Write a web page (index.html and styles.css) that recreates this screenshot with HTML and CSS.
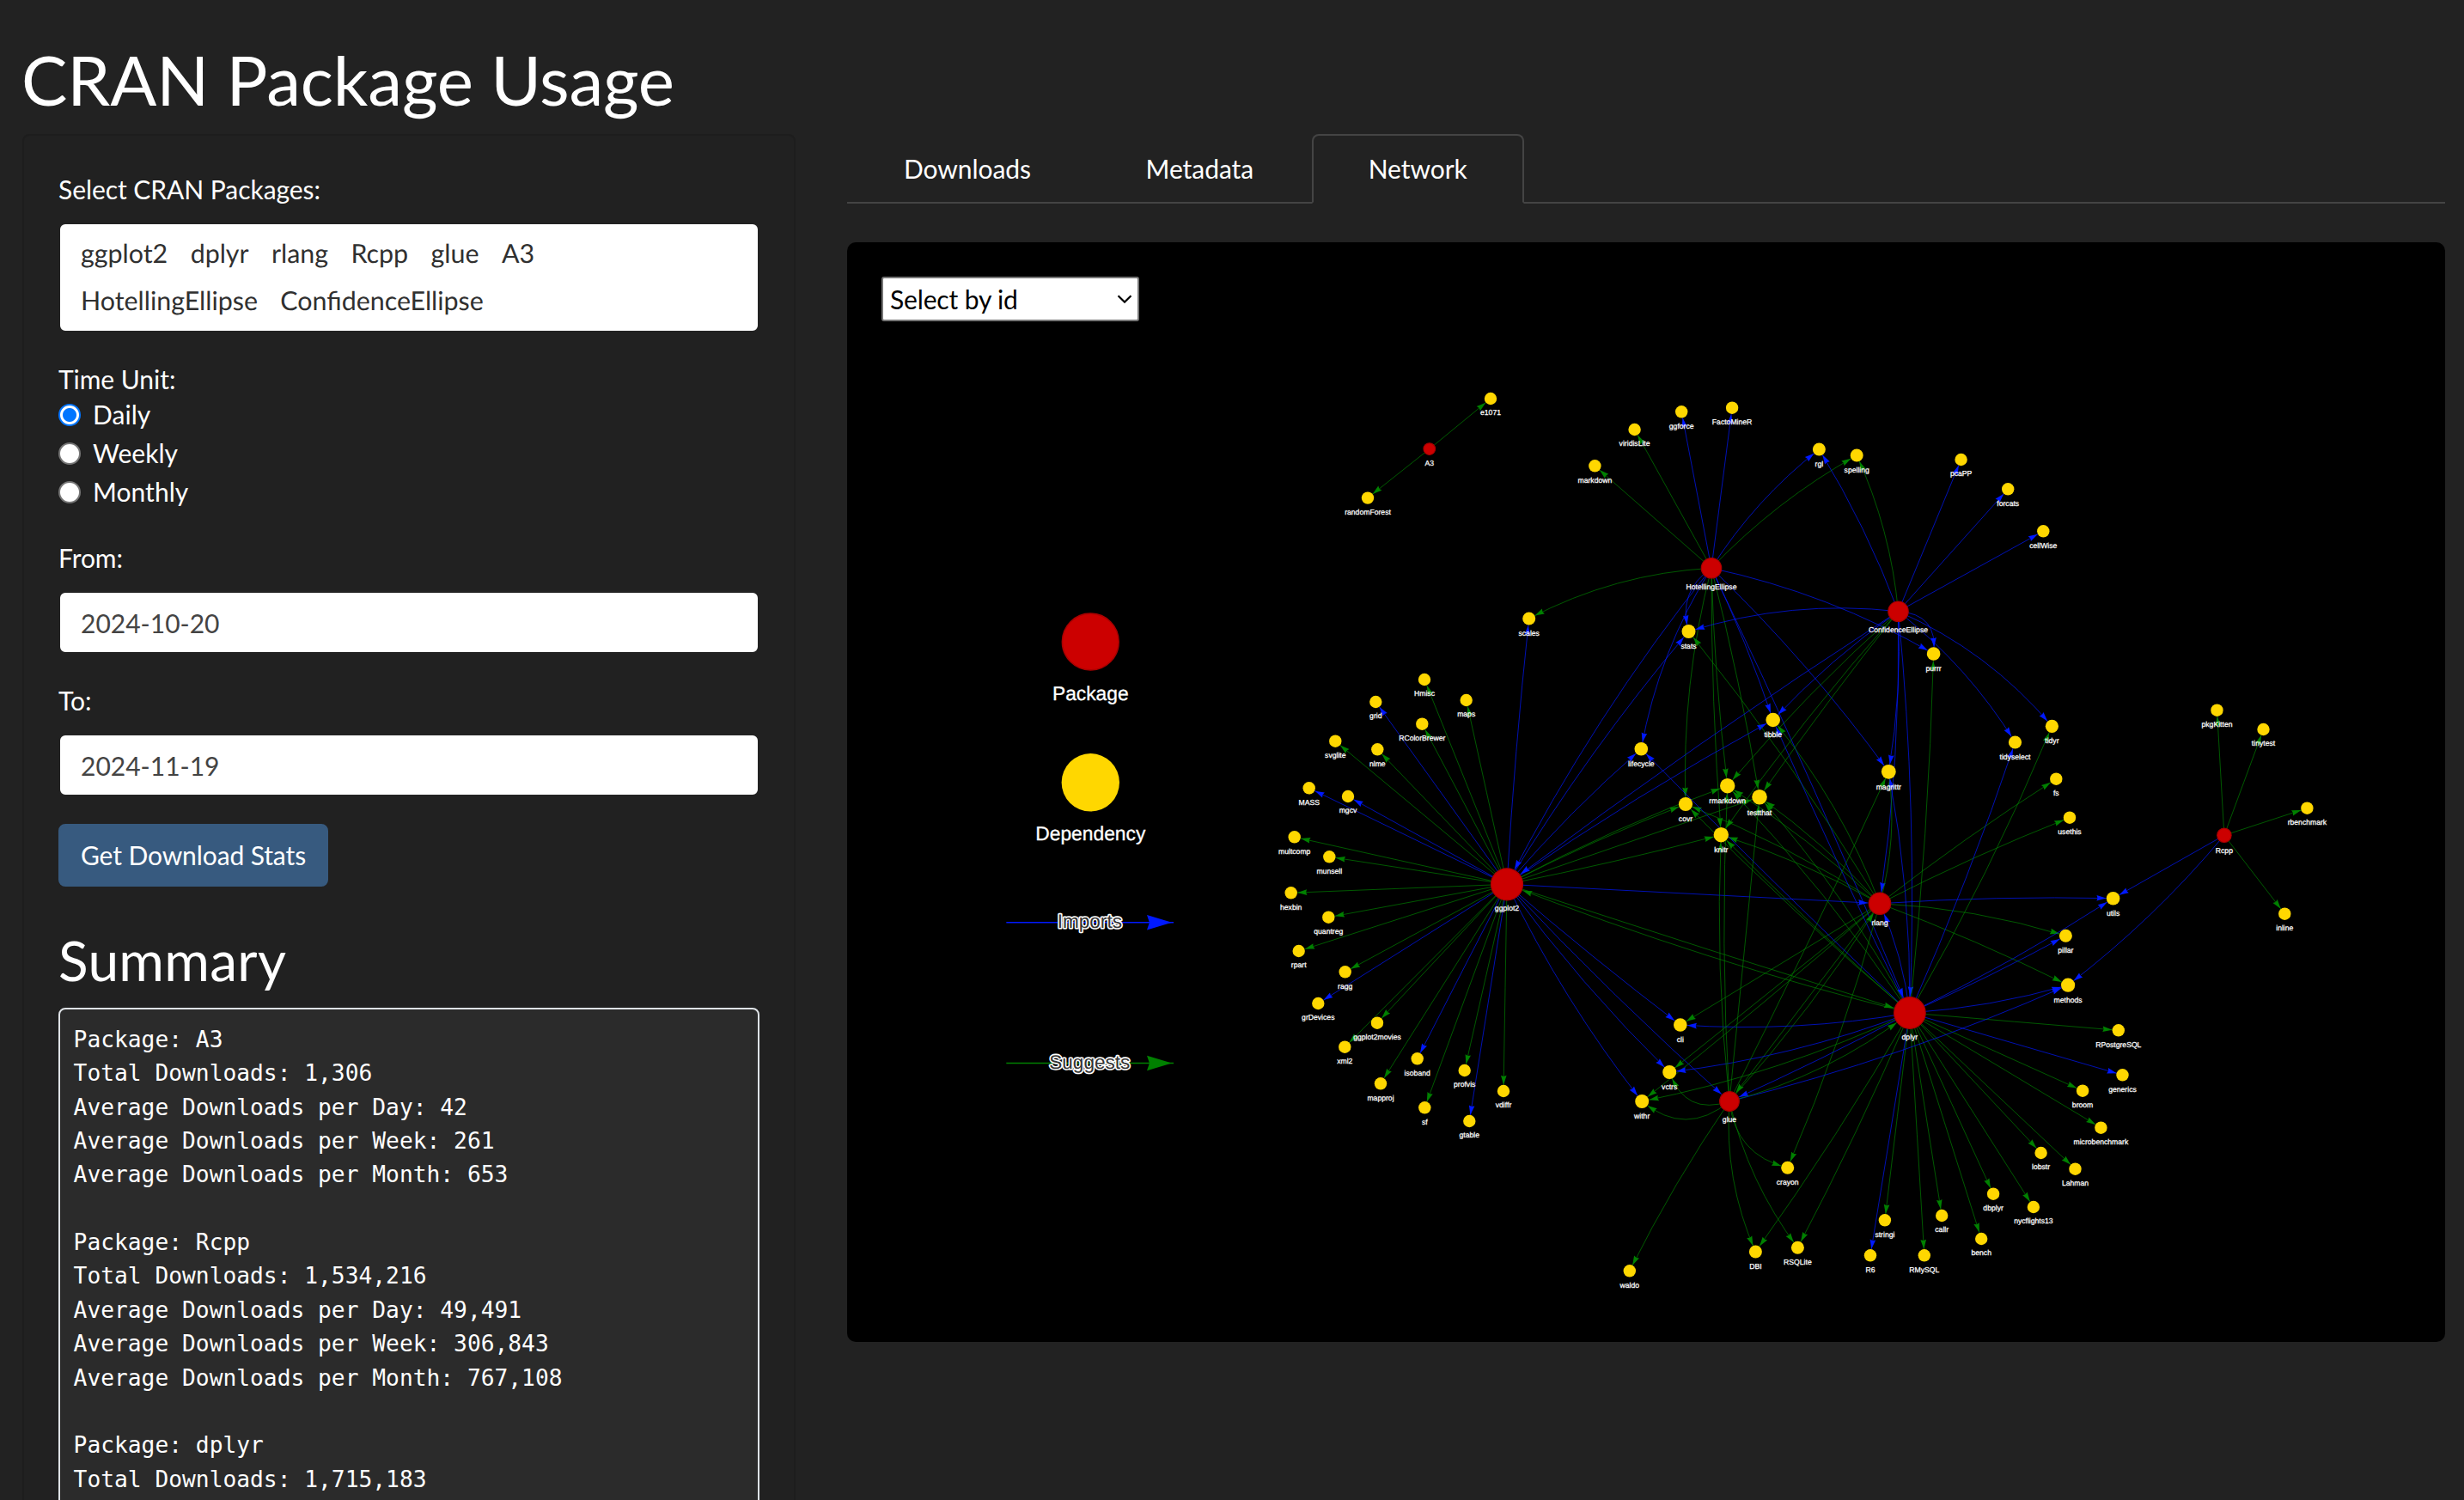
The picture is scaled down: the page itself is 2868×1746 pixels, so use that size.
FILE: index.html
```html
<!DOCTYPE html>
<html lang="en">
<head>
<meta charset="utf-8">
<title>CRAN Package Usage</title>
<link rel="stylesheet" href="styles.css">
</head>
<body>
<div class="page">
  <h2 class="title">CRAN Package Usage</h2>
  <div class="row">
    <form class="well">
      <div class="group">
        <label class="label">Select CRAN Packages:</label>
        <div class="picker">
          <span>ggplot2</span><span>dplyr</span><span>rlang</span><span>Rcpp</span><span>glue</span><span>A3</span>
          <span>HotellingEllipse</span><span>ConfidenceEllipse</span>
        </div>
      </div>
      <div class="group">
        <div class="label label-tight">Time Unit:</div>
        <label class="radio"><input type="radio" name="unit" checked><span>Daily</span></label>
        <label class="radio"><input type="radio" name="unit"><span>Weekly</span></label>
        <label class="radio"><input type="radio" name="unit"><span>Monthly</span></label>
      </div>
      <div class="group">
        <label class="label" for="from">From:</label>
        <input class="field" id="from" type="text" value="2024-10-20">
      </div>
      <div class="group">
        <label class="label" for="to">To:</label>
        <input class="field" id="to" type="text" value="2024-11-19">
      </div>
      <button class="button" type="button">Get Download Stats</button>
      <h3 class="subtitle">Summary</h3>
<pre class="summary">Package: A3
Total Downloads: 1,306
Average Downloads per Day: 42
Average Downloads per Week: 261
Average Downloads per Month: 653

Package: Rcpp
Total Downloads: 1,534,216
Average Downloads per Day: 49,491
Average Downloads per Week: 306,843
Average Downloads per Month: 767,108

Package: dplyr
Total Downloads: 1,715,183
</pre>
    </form>
    <main class="main">
      <nav class="tabs">
        <a class="tab">Downloads</a>
        <a class="tab">Metadata</a>
        <a class="tab tab-active">Network</a>
      </nav>
      <section class="panel">
        <div class="picker-id">
          <select class="select"><option>Select by id</option></select>
          <svg class="chevron" viewBox="0 0 18 10"><path d="M1.5 1.2 9 8.6 16.5 1.2"/></svg>
        </div>
        <svg class="network" id="network" viewBox="986 282 1860 1280"></svg>
      </section>
    </main>
  </div>
</div>
<script src="network.js"></script>
</body>
</html>
```
FILE: styles.css
```css
* { box-sizing: border-box; }
html, body { margin: 0; background: #222222; }
body {
  font-family: Lato, "Liberation Sans", sans-serif;
  font-size: 30px;
  line-height: 45px;
  letter-spacing: -0.05px;
  color: #ffffff;
}
.page { height: 1746px; overflow: hidden; padding: 44px 22px 0 26px; }
.title { margin: 0 0 16px -1px; font-size: 80px; line-height: 96px; font-weight: 400; letter-spacing: -0.15px; }
.row { display: flex; gap: 60px; align-items: flex-start; }
.well {
  width: 900px;
  height: 1800px;
  padding: 40px;
  background: #212121;
  border: 2px solid #1d1d1d;
  border-radius: 8px;
}
.group { margin-bottom: 32px; }
.label { display: block; margin-bottom: 16px; }
.label-tight { margin-bottom: -4px; }
.picker {
  display: flex;
  flex-wrap: wrap;
  gap: 10px 26.4px;
  height: 128px;
  padding: 12px 60px 0 24px;
  align-content: flex-start;
  font-size: 30.4px;
  letter-spacing: 0;
  text-rendering: geometricPrecision;
  color: #303030;
  background: #ffffff;
  border: 2px solid #222222;
  border-radius: 8px;
}
.radio { display: flex; align-items: center; gap: 14px; letter-spacing: 0.05px; }
.radio input {
  appearance: none;
  width: 26px;
  height: 26px;
  margin: 0;
  border: 2px solid #767676;
  border-radius: 50%;
  background: #ffffff;
}
.radio input:checked {
  border-color: #0075ff;
  background: radial-gradient(circle, #0075ff 7.5px, #ffffff 8.5px);
}
.field {
  display: block;
  width: 100%;
  height: 73px;
  padding: 12px 24px;
  font: inherit;
  color: #444444;
  background: #ffffff;
  border: 2px solid #222222;
  border-radius: 8px;
}
.button {
  display: block;
  width: 314px;
  height: 73px;
  padding: 0;
  font: inherit;
  letter-spacing: -0.1px;
  color: #ffffff;
  background: #375a7f;
  border: 2px solid #375a7f;
  border-radius: 8px;
}
.subtitle { margin: 47px 0 17px; font-size: 64px; line-height: 77px; font-weight: 400; letter-spacing: 0.3px; }
.summary {
  height: 900px;
  margin: 0;
  padding: 15.8px 15.6px;
  font-family: "DejaVu Sans Mono", monospace;
  font-size: 26.25px;
  line-height: 39.375px;
  letter-spacing: 0;
  background: #2b2b2b;
  border: 2px solid #dee2e6;
  border-radius: 8px;
}
.main { width: 1860px; }
.tabs { display: flex; gap: 1.5px; height: 81px; border-bottom: 2px solid #444444; }
.tab { height: 81px; padding: 16px 64px; border: 2px solid transparent; }
.tab-active {
  background: #222222;
  border-color: #444444;
  border-bottom-color: #222222;
  border-radius: 8px 8px 0 0;
}
.panel {
  position: relative;
  height: 1280px;
  margin-top: 45px;
  background: #000000;
  border-radius: 10px;
}
.network { display: block; width: 1860px; height: 1280px; letter-spacing: 0; }
.picker-id { position: absolute; left: 40px; top: 40px; width: 300px; height: 52px; }
.select {
  appearance: none;
  width: 100%;
  height: 100%;
  padding: 0 8px;
  font: inherit;
  letter-spacing: -0.15px;
  color: #000000;
  background: #ffffff;
  border: 2px solid #767676;
  border-radius: 3px;
}
.chevron { position: absolute; right: 8px; top: 21px; width: 18px; height: 10px; }
.chevron path { fill: none; stroke: #000000; stroke-width: 2.2; }
.network text {
  font-family: "Liberation Sans", Arial, sans-serif;
  text-rendering: geometricPrecision;
  text-anchor: middle;
  fill: #ffffff;
}
.name { font-size: 8.65px; stroke: #ffffff; stroke-width: 0.25px; }
.key { font-size: 22.8px; stroke: #ffffff; stroke-width: 0.3px; }
.network .key-edge { font-size: 22.6px; fill: #343434; stroke: #ffffff; stroke-width: 3.2px; paint-order: stroke; stroke-linejoin: round; }
.package { fill: #cc0000; stroke: #aa0000; }
.dependency { fill: #ffd700; }
.edge { fill: none; stroke-width: 0.7; }
.edge-key { stroke-width: 1.6; }
.imports { stroke: #0019ff; }
.suggests { stroke: #008000; }
.tip-imports { fill: #0019ff; }
.tip-suggests { fill: #008000; }
```
FILE: network.js
```js
// Nodes: name, x, y, radius
const packages = [
  ["A3", 1663.8, 522.6, 7.3], ["HotellingEllipse", 1992, 661.3, 12.2],
  ["ConfidenceEllipse", 2209.5, 711.7, 12.2], ["ggplot2", 1754, 1029.3, 19],
  ["rlang", 2188, 1051.7, 13.2], ["dplyr", 2222.9, 1179, 18.8],
  ["glue", 2013, 1282, 11.8], ["Rcpp", 2588.9, 972.3, 8.7]
];
const dependencies = [
  ["e1071", 1735, 464, 7.2], ["randomForest", 1592, 579.6, 7.2],
  ["scales", 1779.7, 720, 7.5], ["Hmisc", 1658, 791, 7.2], ["maps", 1706.7, 815, 7.2],
  ["grid", 1601.3, 817, 7.2], ["RColorBrewer", 1655.3, 842.7, 7.2], ["svglite", 1554.3, 862.7, 7.2],
  ["nlme", 1603.3, 872.3, 7.2], ["MASS", 1523.7, 917.3, 7.2], ["mgcv", 1569, 927, 7.2],
  ["multcomp", 1506.7, 974.3, 7.2], ["munsell", 1547.3, 997.3, 7.2], ["hexbin", 1502.7, 1039.3, 7.2],
  ["quantreg", 1546.3, 1067.7, 7.2], ["rpart", 1511.7, 1107, 7.2], ["ragg", 1565.7, 1131.3, 7.2],
  ["grDevices", 1534.3, 1168, 7.2], ["ggplot2movies", 1603, 1190.7, 7.2], ["xml2", 1565.3, 1218.7, 7.2],
  ["mapproj", 1607, 1261.3, 7.2], ["isoband", 1649.7, 1232.3, 7.2], ["profvis", 1704.7, 1246, 7.2],
  ["sf", 1658.3, 1289.3, 7.2], ["gtable", 1710.3, 1305, 7.2], ["vdiffr", 1750, 1270, 7.2],
  ["markdown", 1856.4, 542.3, 7.2], ["viridisLite", 1902.6, 500, 7.2], ["ggforce", 1957.2, 479.3, 7.2],
  ["FactoMineR", 2016.1, 474.7, 7.2], ["rgl", 2117.4, 523, 7.5], ["spelling", 2161.2, 530, 7.5],
  ["pcaPP", 2282.6, 535, 7.2], ["forcats", 2337.2, 569.3, 7.2], ["cellWise", 2378.3, 618.3, 7.2],
  ["stats", 1965.5, 735, 8], ["purrr", 2250.6, 761, 7.8], ["tibble", 2063.7, 838, 8.3],
  ["lifecycle", 1910.3, 871.7, 7.8], ["rmarkdown", 2010.7, 914.7, 8.7], ["testthat", 2048, 927.7, 8.8],
  ["covr", 1962, 936, 8.1], ["knitr", 2003.3, 971.7, 8.7], ["magrittr", 2198.3, 898.3, 8.4],
  ["tidyselect", 2345.5, 864, 7.6], ["tidyr", 2388.4, 845.3, 7.6], ["fs", 2393.3, 906.7, 7.2],
  ["usethis", 2409, 951.7, 7.2], ["utils", 2459.6, 1045.7, 7.8], ["pillar", 2404.4, 1089.3, 7.5],
  ["methods", 2407.1, 1146.7, 8.1], ["pkgKitten", 2580.5, 826.7, 7.2], ["tinytest", 2634.5, 849, 7.2],
  ["rbenchmark", 2685.4, 940.7, 7.2], ["inline", 2659.3, 1063.7, 7.2], ["cli", 1955.8, 1193, 7.8],
  ["vctrs", 1943.2, 1248, 8], ["withr", 1911.2, 1282, 8], ["crayon", 2080.7, 1359.3, 7.5],
  ["DBI", 2043.4, 1457, 7.5], ["RSQLite", 2092.4, 1452.3, 7.5], ["waldo", 1896.8, 1479.3, 7.2],
  ["R6", 2177, 1461.3, 7.2], ["stringi", 2193.9, 1420.3, 7.2], ["RMySQL", 2239.8, 1461.3, 7.2],
  ["callr", 2260.2, 1415, 7.2], ["bench", 2306.2, 1442, 7.2], ["dbplyr", 2320.1, 1389.7, 7.2],
  ["nycflights13", 2366.9, 1405, 7.2], ["Lahman", 2415.5, 1360.7, 7.2], ["lobstr", 2375.6, 1342, 7.2],
  ["microbenchmark", 2445.4, 1312.7, 7.2], ["broom", 2424.1, 1269.7, 7.2],
  ["generics", 2470.5, 1251.3, 7.2], ["RPostgreSQL", 2465.8, 1199.3, 7.2]
];
// Edges per package: "target" or "target:bend", where bend is the sideways bow in pixels
const edges = {
  A3: { suggests: "e1071 randomForest" },
  HotellingEllipse: {
    imports: "FactoMineR ggforce rgl:-8 stats:14 purrr:-11 magrittr:-7 tibble:-3 dplyr:-4 lifecycle:11 ggplot2:11",
    suggests: "viridisLite markdown spelling:-8 scales:12 covr:10 knitr:3 rmarkdown:3 testthat:-3"
  },
  ConfidenceEllipse: {
    imports: "rgl:5 pcaPP forcats cellWise stats:13 purrr:-17 tidyselect:-9 tidyr:-13 ggplot2:5 tibble:5 magrittr:-5 rlang:-7 dplyr:-8",
    suggests: "spelling:8 rmarkdown:5 knitr:5 testthat:2"
  },
  ggplot2: {
    imports: "scales:-2 grid MASS mgcv grDevices isoband gtable stats:-7 lifecycle:-4 tibble:-5 rlang cli:2 vctrs:6 withr:8 glue:4",
    suggests: "Hmisc maps RColorBrewer svglite nlme multcomp munsell hexbin quantreg rpart ragg ggplot2movies xml2 mapproj profvis sf vdiffr covr:-3 rmarkdown:-5 testthat knitr:2 dplyr:1"
  },
  rlang: {
    imports: "utils:-3",
    suggests: "tibble:10 stats:6 rmarkdown:5 testthat:5 covr:6 knitr:5 fs:-3 usethis:-3 pillar:-7 methods:-3 magrittr:8 glue cli vctrs withr:-2 crayon:-6"
  },
  dplyr: {
    imports: "rlang:5 tibble:-2 lifecycle:-2 magrittr:7 tidyselect:4 utils:4 pillar:2 methods:5 cli:-8 vctrs:-9 glue:-2 R6 generics",
    suggests: "knitr:-3 covr:-4 rmarkdown:7 testthat:9 purrr:4 tidyr:6 withr:-10 ggplot2:-8 DBI:-4 RSQLite:-3 stringi RMySQL callr bench dbplyr nycflights13 Lahman lobstr microbenchmark broom RPostgreSQL"
  },
  glue: {
    imports: "methods:9",
    suggests: "dplyr:12 knitr:-6 rmarkdown:-5 testthat magrittr:2 rlang:6 vctrs:-19 withr:-21 crayon:18 DBI:11 RSQLite:10 waldo:4"
  },
  Rcpp: { imports: "utils methods:-7", suggests: "pkgKitten tinytest rbenchmark inline" }
};

const svg = document.getElementById("network");
const nodes = {};
[...packages, ...dependencies].forEach(([name, x, y, r]) => { nodes[name] = { x, y, r }; });

function add(tag, attrs, text) {
  const el = document.createElementNS("http://www.w3.org/2000/svg", tag);
  for (const key in attrs) el.setAttribute(key, attrs[key]);
  if (text) el.textContent = text;
  svg.appendChild(el);
}

function arrow(x, y, ux, uy, size, kind) {
  const at = (along, side) =>
    (x - ux * along * size - uy * side * size).toFixed(1) + "," +
    (y - uy * along * size + ux * side * size).toFixed(1);
  add("polygon", { class: "tip-" + kind, points: [at(0, 0), at(1, 0.3), at(0.9, 0), at(1, -0.3)].join(" ") });
}

function drawEdge(from, to, kind, bend) {
  const a = nodes[from], b = nodes[to];
  const dx = b.x - a.x, dy = b.y - a.y, len = Math.hypot(dx, dy);
  const cx = (a.x + b.x) / 2 - dy / len * bend * 2;
  const cy = (a.y + b.y) / 2 + dx / len * bend * 2;
  // Walk back along the curve until it leaves the target circle
  let t = 1, px = b.x, py = b.y;
  while (t > 0 && Math.hypot(px - b.x, py - b.y) < b.r) {
    t -= 0.002;
    const s = 1 - t;
    px = s * s * a.x + 2 * s * t * cx + t * t * b.x;
    py = s * s * a.y + 2 * s * t * cy + t * t * b.y;
  }
  const q = t - 8 / len, w = 1 - q;
  const qx = w * w * a.x + 2 * w * q * cx + q * q * b.x;
  const qy = w * w * a.y + 2 * w * q * cy + q * q * b.y;
  const d = Math.hypot(px - qx, py - qy);
  add("path", { class: "edge " + kind, d: `M${a.x} ${a.y}Q${cx.toFixed(1)} ${cy.toFixed(1)} ${b.x} ${b.y}` });
  arrow(px, py, (px - qx) / d, (py - qy) / d, 11, kind);
}

for (const from in edges)
  for (const kind in edges[from])
    edges[from][kind].split(" ").forEach(item => {
      const [to, bend] = item.split(":");
      drawEdge(from, to, kind, Number(bend || 0));
    });

function drawNode([name, x, y, r], kind) {
  if (kind === "package") add("circle", { class: kind, cx: x, cy: y, r: r - 0.5, "stroke-width": 1.2 });
  else add("circle", { class: kind, cx: x, cy: y, r });
  add("text", { class: "name", x, y: y + r + 12 }, name);
}
dependencies.forEach(n => drawNode(n, "dependency"));
packages.forEach(n => drawNode(n, "package"));

// Legend
add("circle", { class: "package", cx: 1269.3, cy: 747, r: 32.9, "stroke-width": 1.6 });
add("text", { class: "key", x: 1269.3, y: 815 }, "Package");
add("circle", { class: "dependency", cx: 1269.3, cy: 910.8, r: 33.7 });
add("text", { class: "key", x: 1269.3, y: 978 }, "Dependency");
[["Imports", 1073.8, "imports"], ["Suggests", 1237.5, "suggests"]].forEach(([name, y, kind]) => {
  add("path", { class: "edge edge-key " + kind, d: `M1171.3 ${y}H1366` });
  arrow(1364, y, 1, 0, 29, kind);
  add("text", { class: "key-edge", x: 1268.3, y: y + 6.5 }, name);
});
```
